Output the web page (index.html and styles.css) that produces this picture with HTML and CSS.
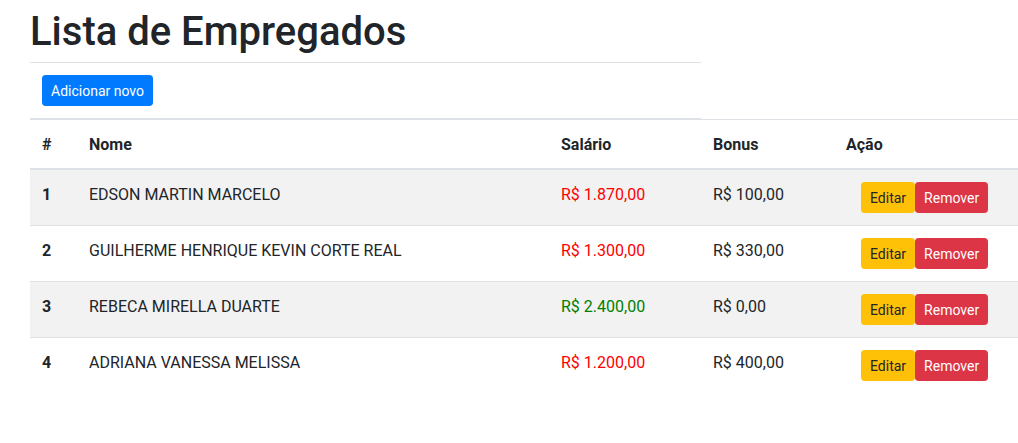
FILE: index.html
```html
<!DOCTYPE html>
<html lang="pt-BR">
<head>
<meta charset="utf-8">
<title>Lista de Empregados</title>
<link rel="stylesheet" href="styles.css">
</head>
<body>
<div class="page">
  <div class="header">
    <h1 class="title">Lista de Empregados</h1>
    <div class="toolbar">
      <button class="btn btn-primary">Adicionar novo</button>
    </div>
  </div>
  <table class="table">
    <thead>
      <tr>
        <th class="col-id">#</th>
        <th class="col-name">Nome</th>
        <th class="col-salary">Salário</th>
        <th class="col-bonus">Bonus</th>
        <th class="col-action">Ação</th>
      </tr>
    </thead>
    <tbody>
      <tr class="striped">
        <th>1</th>
        <td>EDSON MARTIN MARCELO</td>
        <td class="low">R$ 1.870,00</td>
        <td>R$ 100,00</td>
        <td class="actions"><button class="btn btn-warning">Editar</button><button class="btn btn-danger">Remover</button></td>
      </tr>
      <tr>
        <th>2</th>
        <td>GUILHERME HENRIQUE KEVIN CORTE REAL</td>
        <td class="low">R$ 1.300,00</td>
        <td>R$ 330,00</td>
        <td class="actions"><button class="btn btn-warning">Editar</button><button class="btn btn-danger">Remover</button></td>
      </tr>
      <tr class="striped">
        <th>3</th>
        <td>REBECA MIRELLA DUARTE</td>
        <td class="high">R$ 2.400,00</td>
        <td>R$ 0,00</td>
        <td class="actions"><button class="btn btn-warning">Editar</button><button class="btn btn-danger">Remover</button></td>
      </tr>
      <tr>
        <th>4</th>
        <td>ADRIANA VANESSA MELISSA</td>
        <td class="low">R$ 1.200,00</td>
        <td>R$ 400,00</td>
        <td class="actions"><button class="btn btn-warning">Editar</button><button class="btn btn-danger">Remover</button></td>
      </tr>
    </tbody>
  </table>
</div>
</body>
</html>
```

FILE: styles.css
```css
* { box-sizing: border-box; }

html, body {
  margin: 0;
  padding: 0;
  background: #fff;
  overflow: hidden;
}

body {
  font-family: Roboto, "Liberation Sans", sans-serif;
  font-size: 16px;
  line-height: 1.5;
  color: #212529;
}

.page {
  padding: 8px 0 0 30px;
}

.header {
  width: 671px;
}

.title {
  margin: 0 0 6px 0;
  font-size: 40px;
  font-weight: 500;
  line-height: 48px;
}

.toolbar {
  padding: 12px;
  border-top: 1px solid #dee2e6;
  border-bottom: 1px solid #dee2e6;
}

.btn {
  display: inline-block;
  font-family: inherit;
  font-size: 14px;
  line-height: 1.5;
  padding: 5px 8px 3px;
  border: 1px solid transparent;
  border-radius: 3.2px;
  cursor: pointer;
  vertical-align: middle;
}

.btn-primary { background: #007bff; border-color: #007bff; color: #fff; }
.btn-warning { background: #ffc107; border-color: #ffc107; color: #212529; }
.btn-danger { background: #dc3545; border-color: #dc3545; color: #fff; }

.table {
  width: 988px;
  border-collapse: collapse;
  table-layout: fixed;
}

.table th,
.table td {
  padding: 13px 12px 11px;
  text-align: left;
  vertical-align: top;
  border-top: 1px solid #dee2e6;
}

.table th { font-weight: 700; }

.table thead th {
  border-bottom: 2px solid #dee2e6;
  vertical-align: bottom;
}

.col-id { width: 47px; }
.col-name { width: 472px; }
.col-salary { width: 152px; }
.col-bonus { width: 133px; }
.col-action { width: 184px; }

.striped { background: #f2f2f2; }

.low { color: #ff0000; }
.high { color: #008000; }

.table td.actions {
  padding: 12px 12px 12px 27px;
  white-space: nowrap;
}
```
